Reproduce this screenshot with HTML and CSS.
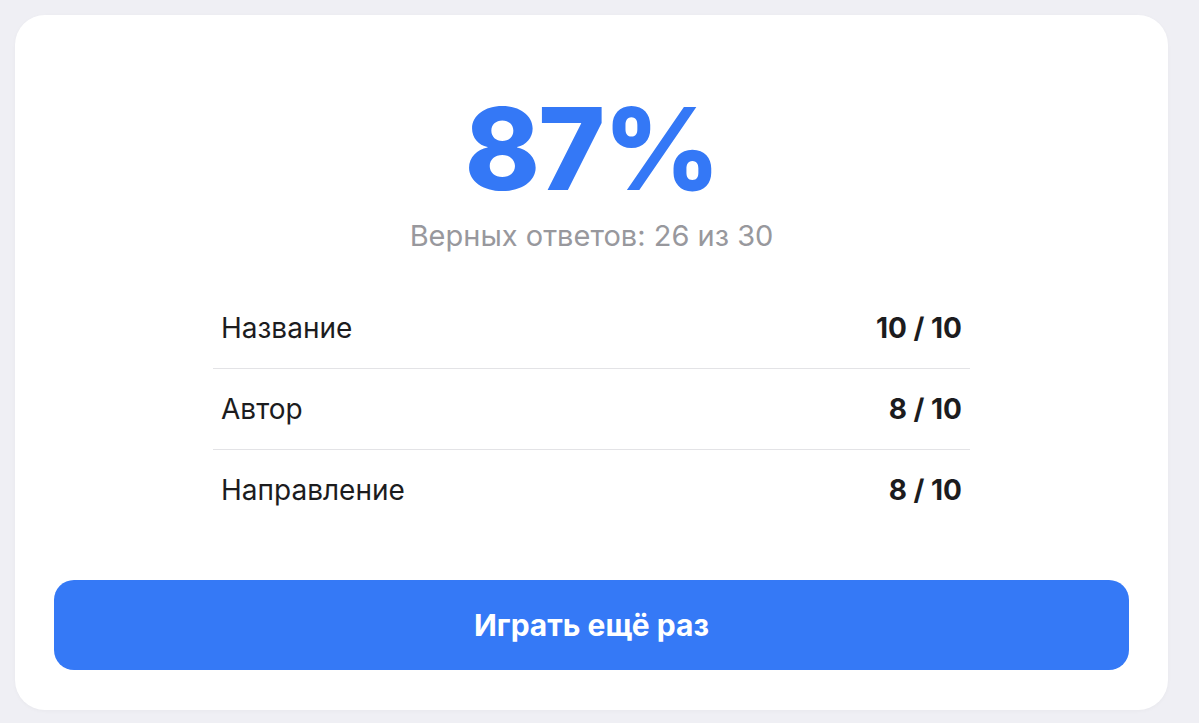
FILE: index.html
```html
<!DOCTYPE html>
<html lang="ru">
<head>
  <meta charset="UTF-8" />
  <title>Результат</title>
  <meta name="viewport" content="width=device-width, initial-scale=1.0" />
  <link rel="stylesheet" href="styles.css">
</head>
<body>

  <div class="result-card">
    <div class="score">
      <div class="score-percent">87%</div>
      <div class="score-caption">Верных ответов: 26 из 30</div>
    </div>

    <ul class="breakdown">
      <li class="breakdown-row">
        <span class="breakdown-label">Название</span>
        <span class="breakdown-value">10 / 10</span>
      </li>
      <li class="breakdown-row">
        <span class="breakdown-label">Автор</span>
        <span class="breakdown-value">8 / 10</span>
      </li>
      <li class="breakdown-row">
        <span class="breakdown-label">Направление</span>
        <span class="breakdown-value">8 / 10</span>
      </li>
    </ul>

    <button class="play-again">Играть ещё раз</button>
  </div>

</body>
</html>
```

FILE: styles.css
```css
/* Basic reset */
* {
  margin: 0;
  padding: 0;
  box-sizing: border-box;
}

body {
  font-family: Inter, "Noto Sans", sans-serif;
  background-color: #efeff4;
  padding: 15px 31px 13px 15px;
}

.result-card {
  background-color: #fff;
  border-radius: 30px;
  padding: 77px 39px 40px;
  box-shadow: 0 1px 4px rgba(0, 0, 0, 0.03);
}

/* Score header */
.score {
  text-align: center;
}

.score-percent {
  font-size: 114px;
  font-weight: 800;
  line-height: 1;
  letter-spacing: -2px;
  color: #3478f6;
}

.score-caption {
  margin-top: 15px;
  font-size: 29px;
  line-height: 1;
  color: #98989d;
}

/* Per-category results */
.breakdown {
  list-style: none;
  max-width: 757px;
  margin: 38px auto 0;
}

.breakdown-row {
  display: flex;
  justify-content: space-between;
  align-items: center;
  height: 80px;
  padding: 0 8px;
  font-size: 28px;
  color: #1c1c1e;
}

.breakdown-row + .breakdown-row {
  height: 81px;
  border-top: 1px solid #e3e3e6;
}

.breakdown-value {
  font-weight: 700;
}

.play-again {
  display: block;
  width: 100%;
  height: 90px;
  margin-top: 50px;
  border: none;
  border-radius: 20px;
  background-color: #3579f6;
  color: #fff;
  font-family: inherit;
  font-size: 30px;
  font-weight: 700;
  cursor: pointer;
}
```
